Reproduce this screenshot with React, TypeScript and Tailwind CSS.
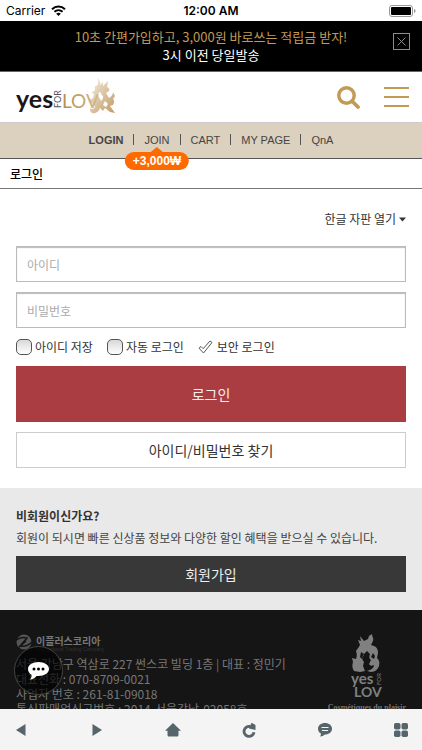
import { useState } from "react";
import type { ReactNode } from "react";

const NAV_LINKS = ["LOGIN", "JOIN", "CART", "MY PAGE", "QnA"];

const FOOTER_LINES = [
  "서울 강남구 역삼로 227 썬스코 빌딩 1층 | 대표 : 정민기",
  "대표전화 : 070-8709-0021",
  "사업자 번호 : 261-81-09018",
  "통신판매업신고번호 : 2014-서울강남-02058호",
];

function StatusBar() {
  return (
    <div className="grid h-[21px] shrink-0 grid-cols-3 items-center bg-white px-[6px] font-['Inter','Liberation_Sans',sans-serif] text-[12px] text-black">
      <div className="flex items-center gap-[6px]">
        <span>Carrier</span>
        <svg width="15" height="11" viewBox="0 0 15 11" fill="none" stroke="#000" strokeWidth="2">
          <path d="M1 4.2C4.7.7 10.3.7 14 4.2" />
          <path d="M3.4 6.8c2.4-2.2 5.8-2.2 8.2 0" />
          <path d="M7.5 11 5.2 8.7c1.3-1.2 3.3-1.2 4.6 0z" fill="#000" stroke="none" />
        </svg>
      </div>
      <div className="text-center font-semibold">12:00 AM</div>
      <svg className="justify-self-end" width="27" height="12" viewBox="0 0 27 12">
        <rect x=".5" y=".5" width="23" height="11" rx="2.5" fill="#fff" stroke="#999" />
        <rect x="2" y="2" width="20" height="8" rx="1" fill="#000" />
        <path d="M25 4c2 .6 2 3.4 0 4z" fill="#999" />
      </svg>
    </div>
  );
}

function PromoBanner() {
  return (
    <div className="relative flex h-[50px] shrink-0 flex-col items-center justify-center bg-black text-[13px] leading-[18px] text-white">
      <p className="text-[#c39a54]">10초 간편가입하고, 3,000원 바로쓰는 적립금 받자!</p>
      <p>3시 이전 당일발송</p>
      <button aria-label="닫기" className="absolute top-3 right-3">
        <svg width="17" height="17" viewBox="0 0 17 17" fill="none" stroke="#8c8c8c">
          <rect x=".5" y=".5" width="16" height="16" />
          <path d="m4.5 4.5 8 8m0-8-8 8" />
        </svg>
      </button>
    </div>
  );
}

function HeaderLogo() {
  return (
    <svg width="102" height="40" viewBox="0 0 102 40" role="img" aria-label="Yes for Lov">
      <defs>
        <linearGradient id="gold" x1="0" y1="0" x2="1" y2="0">
          <stop offset="0" stopColor="#b58d50" />
          <stop offset="1" stopColor="#d3b888" />
        </linearGradient>
        <linearGradient id="flame" x1="0" y1="0" x2="1" y2="1">
          <stop offset=".1" stopColor="#f1e8d9" />
          <stop offset=".6" stopColor="#d6bd98" />
          <stop offset="1" stopColor="#c19a66" />
        </linearGradient>
      </defs>
      <text x="0" y="31" fontSize="25" fontFamily="Lato" fontWeight="700" fill="#1b1718">yes</text>
      <text transform="translate(45 31) rotate(-90)" fontSize="9" fontFamily="Lato" fill="#555">FOR</text>
      <g transform="translate(74 1)" fill="url(#flame)">
        <path d="M8 0c1 3 3 4 2 7l3-3v4l5-5-1 6c2 1 3 2 2 4l-3 2 3 5c2-1 4-3 4-6l2 4-2 3c2 2 1 4 0 6l-3 1 5 7-5-1-5-4-2 3-3-3c-1 4-5 6-8 5-2-1-2-3-2-5 2 2 5 1 5-2l-3-3c-2 0-4-2-4-5 2 2 4 1 5 0l1-4-3-2c2 0 4-1 4-3L5 8c2 0 3-1 3-3 1-2-1-3 0-5zm2 14c-2 1-3 3-1 5l2 4c2-2 3-4 1-6zm5 9-2 4 3 2 2-3z" fillRule="evenodd" />
      </g>
      <text x="46" y="31" fontSize="19" fontFamily="Lato" fill="url(#gold)">LOV</text>
    </svg>
  );
}

function Header() {
  return (
    <header className="flex h-[51px] items-center justify-between border-t border-[#666] bg-white pr-[13px] pl-4">
      <a href="#home">
        <HeaderLogo />
      </a>
      <div className="flex items-center gap-6">
        <button aria-label="검색">
          <svg width="23" height="23" viewBox="0 0 23 23" fill="none" stroke="#c39a54">
            <circle cx="9.5" cy="9.5" r="7.7" strokeWidth="3.4" />
            <path d="m15.5 15.5 5.5 5.5" strokeWidth="3.8" strokeLinecap="round" />
          </svg>
        </button>
        <button aria-label="메뉴" className="flex w-[25px] flex-col gap-[7px]">
          <span className="h-[2px] w-full bg-[#c39a54]" />
          <span className="h-[2px] w-full bg-[#c39a54]" />
          <span className="h-[2px] w-full bg-[#c39a54]" />
        </button>
      </div>
    </header>
  );
}

function NavBar() {
  return (
    <nav className="flex h-[37px] items-center justify-center border-t border-b border-t-[#ccc] border-b-[#555] bg-[#dcd0be] pb-[2px] font-['Liberation_Sans','Noto_Sans_CJK_KR',sans-serif] text-[11px] leading-[16px] text-[#444]">
      {NAV_LINKS.map((name, i) => (
        <div key={name} className="flex items-center">
          {i > 0 && <span className="mx-[10px] h-[11px] w-px bg-[#555]" />}
          <a href="#nav" className={i === 0 ? "font-bold" : "relative"}>
            {name}
            {name === "JOIN" && (
              <span className="absolute top-[15px] left-1/2 flex -translate-x-1/2 flex-col items-center">
                <svg width="12" height="5" viewBox="0 0 12 5" fill="#ff6a00">
                  <path d="M6 0l6 5H0z" />
                </svg>
                <span className="h-[18px] rounded-full bg-[#ff6a00] px-2 text-[12px] leading-[18px] font-bold text-white">
                  +3,000₩
                </span>
              </span>
            )}
          </a>
        </div>
      ))}
    </nav>
  );
}

function CheckOption({ label }: { label: string }) {
  return (
    <label className="flex items-center gap-[3px]">
      <input
        type="checkbox"
        className="size-4 appearance-none rounded-[5px] border border-[#555] bg-linear-to-b from-[#d8d8d8] to-white checked:bg-[#777] checked:bg-none"
      />
      {label}
    </label>
  );
}

function LoginForm() {
  const [secure, setSecure] = useState(true);
  const field =
    "h-9 w-full border border-[#bbb] bg-white px-[10px] text-[12px] shadow-[inset_0_1px_1px_#bbb] outline-none placeholder:text-[#aaa]";

  return (
    <form className="px-4 pt-5 pb-5" onSubmit={(e) => e.preventDefault()}>
      <div className="flex justify-end">
        <button type="button" className="flex h-5 items-center gap-[3px] text-[12px]">
          한글 자판 열기
          <svg width="7" height="5" viewBox="0 0 7 5" fill="#333">
            <path d="M0 .5h7l-3.5 4z" />
          </svg>
        </button>
      </div>
      <div className="mt-[17px] flex flex-col gap-[10px]">
        <input type="text" aria-label="아이디" placeholder="아이디" className={field} />
        <input type="password" aria-label="비밀번호" placeholder="비밀번호" className={field} />
      </div>
      <div className="flex h-[38px] items-center gap-[14px] text-[12px]">
        <CheckOption label="아이디 저장" />
        <CheckOption label="자동 로그인" />
        <label className="flex items-center gap-1">
          <input
            type="checkbox"
            className="sr-only"
            checked={secure}
            onChange={(e) => setSecure(e.target.checked)}
          />
          <svg width="15" height="14" viewBox="0 0 15 14" fill={secure ? "#fff" : "none"} stroke="#555" strokeLinejoin="round">
            <path d="M1 8.2 3 6.5l2.2 2.2L12 1l2 1.5L5.5 13z" />
          </svg>
          보안 로그인
        </label>
      </div>
      <button type="submit" className="h-14 w-full bg-[#a93d41] text-[14px] text-[#f8eeee]">
        로그인
      </button>
      <button type="button" className="mt-[10px] h-9 w-full border border-[#ccc] bg-white text-[14px]">
        아이디/비밀번호 찾기
      </button>
    </form>
  );
}

function JoinSection() {
  return (
    <section className="bg-[#e9e9e9] px-4 pt-[18px] pb-[18px] text-[12px]">
      <h2 className="leading-[20px] font-bold">비회원이신가요?</h2>
      <p className="mt-[2px] leading-[20px] text-[#444]">
        회원이 되시면 빠른 신상품 정보와 다양한 할인 혜택을 받으실 수 있습니다.
      </p>
      <button className="mt-2 h-9 w-full bg-[#383838] text-[14px] text-[#eee]">회원가입</button>
    </section>
  );
}

function FooterLogo() {
  return (
    <svg width="32" height="66" viewBox="0 0 32 66" role="img" aria-label="Yes for Lov" fill="#808080">
      <path d="M21 0c0 3 2 4 1 7l-2 4 3 1c3 1 4 4 4 7l-1 5c2 2 3 4 2 8-1 3-4 6-8 6l-4-1c4-1 7-3 7-6-2 1-4 1-5-1l2-4c-2-1-2-4-1-6l-3-3-4 4c-1 3-1 5 1 7l-1 4 2 5-5 1-6-1c-2-3-2-6-1-9l-1-4 4 1c1-3 1-5 0-8 2-3 3-4 4-6l-2-5 3 1-1-5 4 5 4-2 1-3zM10 18l-1 5 2 2 2-5zm12 1-2 4 3 2 1-3z" fillRule="evenodd" />
      <text x="0" y="50" fontSize="15" fontFamily="Lato" fontWeight="700">yes</text>
      <text transform="translate(30 51) rotate(-90)" fontSize="6" fontFamily="Lato">FOR</text>
      <text x="3" y="63" fontSize="14" fontFamily="Lato" fontWeight="700">LOV</text>
    </svg>
  );
}

function Footer() {
  return (
    <footer className="flex items-start justify-between bg-[#151515] px-4 pt-6 pb-12 text-[#777]">
      <div>
        <div className="flex h-[22px] items-start gap-1">
          <svg width="16" height="16" viewBox="0 0 16 16">
            <circle cx="8" cy="8" r="7.5" fill="#555" />
            <path d="M0 6c5-3 8-3 11-2L4 12c4 1 8 0 12-4M2 14l8-7" fill="none" stroke="#151515" strokeWidth="1.5" />
          </svg>
          <div className="flex flex-col">
            <strong className="text-[10px] leading-[13px]">이플러스코리아</strong>
            <span className="font-['Liberation_Sans',sans-serif] text-[5px] leading-[5px] text-[#333]">
              International Trading Company
            </span>
          </div>
        </div>
        <address className="text-[12px] leading-[15px] whitespace-nowrap not-italic">
          {FOOTER_LINES.map((line) => (
            <p key={line}>{line}</p>
          ))}
        </address>
      </div>
      <div className="flex flex-col items-center">
        <FooterLogo />
        <span className="mt-[3px] font-['Liberation_Serif',serif] text-[8px] leading-[10px] font-bold">
          Cosmétiques du plaisir
        </span>
      </div>
    </footer>
  );
}

function ChatButton() {
  return (
    <button
      aria-label="상담"
      className="absolute bottom-[14px] left-[14px] flex size-[49px] items-center justify-center rounded-full border border-[#444] bg-black/65"
    >
      <svg width="21" height="18" viewBox="0 0 21 18">
        <path d="M10.5 0C16.5 0 21 3 21 7s-4.500 7-10.500 7h-2C7 16.200 4.500 17.500 2 17.500c1.300-1.300 1.800-3 1.500-4.700C1.300 11.500 0 9.500 0 7c0-4 4.500-7 10.500-7z" fill="#fff" />
        <circle cx="6" cy="7" r="1.5" />
        <circle cx="10.5" cy="7" r="1.5" />
        <circle cx="15" cy="7" r="1.5" />
      </svg>
    </button>
  );
}

function ToolButton({ label, children }: { label: string; children: ReactNode }) {
  return (
    <button aria-label={label} className="flex h-full w-4 items-center justify-center">
      <svg width="16" height="16" viewBox="0 0 16 16" fill="#56646b">
        {children}
      </svg>
    </button>
  );
}

function BottomBar() {
  return (
    <div className="flex h-[41px] shrink-0 items-center justify-between bg-[#f4f4f4] px-[13px]">
      <ToolButton label="뒤로">
        <path d="M12.5 2v12L3 8z" />
      </ToolButton>
      <ToolButton label="앞으로">
        <path d="M3.5 2v12L13 8z" />
      </ToolButton>
      <ToolButton label="홈">
        <path d="M8 1l8 7.7h-2.5V13c0 .8-.5 1.5-1.5 1.5H4c-1 0-1.500-.7-1.500-1.500V8.700H0z" />
      </ToolButton>
      <ToolButton label="새로고침">
        <path d="M13 10.2A5 5 0 1 1 9.5 4.6" fill="none" stroke="#56646b" strokeWidth="2.8" />
        <path d="M10.500.8 14.500 3v5L8 6.500z" />
      </ToolButton>
      <ToolButton label="메시지">
        <path d="M8 1c4 0 7 2.400 7 5.700s-3 5.800-7 5.800c-1.500 1.300-3 2-5 2 .8-.9 1.100-1.900.9-3C2 10.500 1 8.700 1 6.700 1 3.400 4 1 8 1z" />
        <path d="M4.500 5.500h7M5 8.500h6" stroke="#f4f4f4" strokeWidth="1.2" />
      </ToolButton>
      <ToolButton label="전체메뉴">
        <rect x="1" y="1" width="6.5" height="6.5" rx="1.8" />
        <rect x="8.5" y="1" width="6.5" height="6.5" rx="1.8" />
        <rect x="1" y="8.5" width="6.5" height="6.5" rx="1.8" />
        <rect x="8.5" y="8.5" width="6.5" height="6.5" rx="1.8" />
      </ToolButton>
    </div>
  );
}

export default function App() {
  return (
    <div className="flex h-dvh flex-col bg-white font-['Noto_Sans_CJK_KR','Liberation_Sans',sans-serif] text-[#333]">
      <StatusBar />
      <PromoBanner />
      <div className="relative flex min-h-0 flex-1 flex-col">
        <main className="min-h-0 flex-1 overflow-y-auto [scrollbar-width:none]">
          <Header />
          <NavBar />
          <h1 className="h-[30px] border-b border-[#777] px-[10px] text-[12px] leading-[29px] font-medium text-black">
            로그인
          </h1>
          <LoginForm />
          <JoinSection />
          <Footer />
        </main>
        <ChatButton />
      </div>
      <BottomBar />
    </div>
  );
}
